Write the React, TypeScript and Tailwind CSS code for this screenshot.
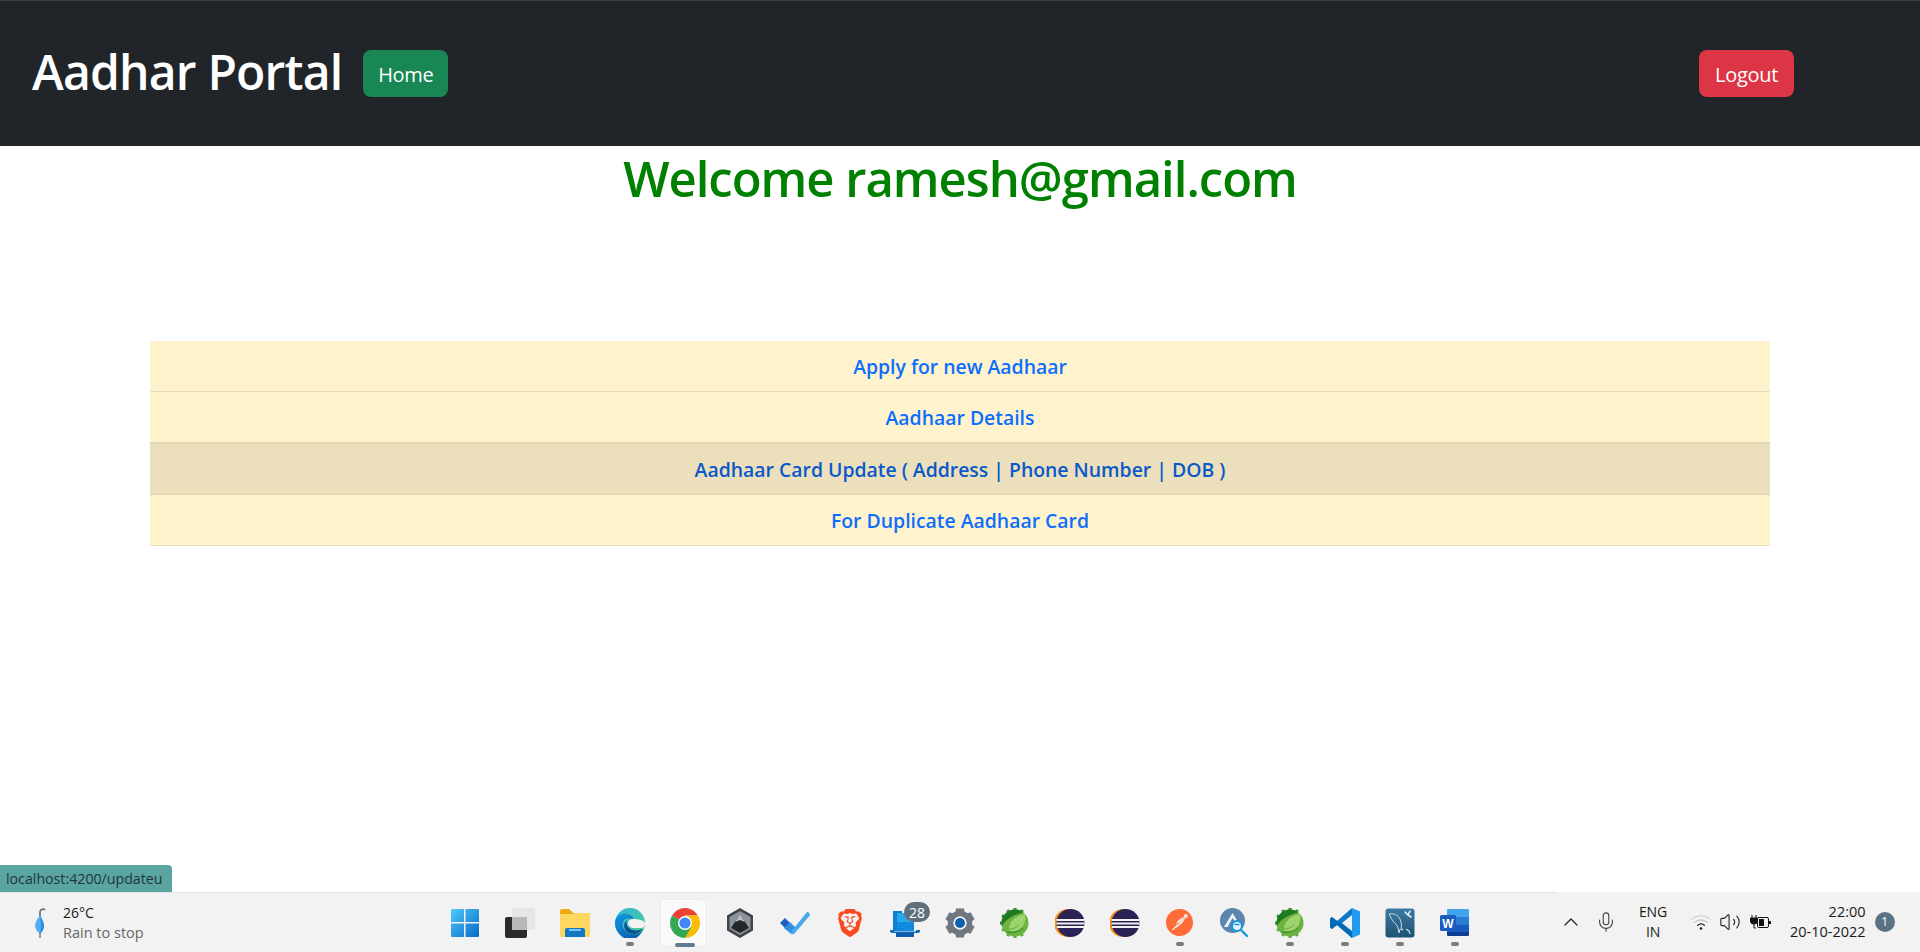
import { SiBrave, SiPostman } from "react-icons/si";
import { ChevronUp, Mic, Volume2 } from "lucide-react";

const rows = [
  { label: "Apply for new Aadhaar", active: false },
  { label: "Aadhaar Details", active: false },
  { label: "Aadhaar Card Update ( Address | Phone Number | DOB )", active: true },
  { label: "For Duplicate Aadhaar Card", active: false },
];

function StartIcon() {
  return (
    <svg width="30" height="30" viewBox="0 0 30 30">
      <defs>
        <linearGradient id="start" x1="0" y1="0" x2="1" y2="1">
          <stop offset="0" stopColor="#4fcbfa" />
          <stop offset="1" stopColor="#0669c8" />
        </linearGradient>
      </defs>
      <path fill="url(#start)" d="M1 2a1 1 0 0 1 1-1h12v13H1zM15.500 1H28a1 1 0 0 1 1 1v12H15.500zM1 15.500h13V29H2a1 1 0 0 1-1-1zM15.500 15.500H29V28a1 1 0 0 1-1 1H15.500z" />
    </svg>
  );
}

function TaskViewIcon() {
  return (
    <svg width="32" height="32" viewBox="0 0 32 32">
      <rect x="1" y="10" width="22" height="21" rx="2" fill="#2b2b2b" />
      <rect x="8" y="1" width="23" height="22" rx="2" fill="#e6e6e6" />
      <path d="M8 10h15v13H8z" fill="#b8b8b8" />
    </svg>
  );
}

function FolderIcon() {
  return (
    <svg width="32" height="30" viewBox="0 0 32 30">
      <path d="M1 3a2 2 0 0 1 2-2h7l4 4h16a1 1 0 0 1 1 1v4H1z" fill="#eeaa10" />
      <path d="M1 6h13l2-1h14a1 1 0 0 1 1 1v22a1 1 0 0 1-1 1H2a1 1 0 0 1-1-1z" fill="#fdd75f" />
      <path d="M6 29v-7a2 2 0 0 1 2-2h16a2 2 0 0 1 2 2v7z" fill="#1378c4" />
      <rect x="10" y="21" width="12" height="2" fill="#7fc4f0" />
    </svg>
  );
}

function EdgeIcon() {
  return (
    <svg width="30" height="30" viewBox="0 0 30 30">
      <defs>
        <linearGradient id="edge1" x1="0" y1="0" x2="1" y2="1">
          <stop offset="0" stopColor="#2fb3dc" />
          <stop offset="1" stopColor="#4fd08a" />
        </linearGradient>
        <linearGradient id="edge2" x1="0" y1="0" x2="0.8" y2="1">
          <stop offset="0" stopColor="#1098e6" />
          <stop offset="1" stopColor="#0c59a4" />
        </linearGradient>
      </defs>
      <circle cx="15" cy="15" r="15" fill="url(#edge1)" />
      <path d="M0 15C0 8 7 5 12 6c5 1 7 4 6 6-2-2-8-3-10 2-2 6 3 11 9 12 5 1 9-1 11-4-3 6-8 10-14 10C6 30 0 23 0 15z" fill="url(#edge2)" />
      <path d="M19 20c-3 0-6-2-6-5 0-2 2-4 5-4 5 0 12 1 12 5 0 3-2 4-4 4-3 0-4 0-7 0z" fill="#f2f2f2" />
      <path d="M18 22c-5-1-8-6-6-10-4 3-4 10 2 13 5 2 10 1 14-4-3 1-6 2-10 1z" fill="#0a4f96" />
    </svg>
  );
}

function ChromeIcon() {
  return (
    <svg width="30" height="30" viewBox="0 0 30 30">
      <path d="M15 15 2.010 7.500A15 15 0 0 1 27.990 7.500H15z" fill="#ea4335" />
      <path d="M15 15 15 30A15 15 0 0 0 27.990 7.500H15z" fill="#fbbc05" />
      <path d="M15 15 2.010 7.500A15 15 0 0 0 15 30l6.500-11.250z" fill="#34a853" />
      <circle cx="15" cy="15" r="7" fill="#ffffff" />
      <circle cx="15" cy="15" r="5.600" fill="#4285f4" />
    </svg>
  );
}

function HexIcon() {
  return (
    <svg width="28" height="30" viewBox="0 0 28 30">
      <path d="M14 0 27 7.500v15L14 30 1 22.500v-15z" fill="#3f4449" />
      <path d="M14 3 24.500 9v12L14 27 3.500 21V9z" fill="#8c939a" />
      <path d="M14 6 23 20l-9 5-9-5z" fill="#24272a" />
      <path d="M14 6 19 14l-5-2-5 2z" fill="#b9bfc5" />
    </svg>
  );
}

function TodoIcon() {
  return (
    <svg width="30" height="24" viewBox="0 0 30 24">
      <path d="m0 12 5-5 6 6-5 5z" fill="#1f5cc4" />
      <path d="M4 17 10 11l6 6-4 5a1.500 1.500 0 0 1-2 0z" fill="#2f8fe0" />
      <path d="M10 22 27 1a1 1 0 0 1 1.200 0l1.500 2a1 1 0 0 1 0 1.500L15 22c-1.500 1.700-3.500 1.700-5 0z" fill="#48a8ee" />
    </svg>
  );
}

function TowerIcon() {
  return (
    <svg width="30" height="28" viewBox="0 0 30 28">
      <path d="M3 2h9v20H3z" fill="#0f7fd0" />
      <path d="M7 4h17v18H7z" fill="#28a8ea" />
      <path d="M7 13h17v9H7z" fill="#0f8adf" />
      <path d="M0 21h4v1.500h22V21h4v1a2 2 0 0 1-2 2H2a2 2 0 0 1-2-2z" fill="#0f6cbd" />
      <path d="M6 24h18v4H6z" fill="#0b5cab" />
    </svg>
  );
}

function GearIcon() {
  const teeth = [0, 60, 120, 180, 240, 300];
  return (
    <svg width="30" height="30" viewBox="0 0 30 30">
      {teeth.map((a) => (
        <path key={a} d="M11 0.500h8l1 6h-10z" fill="#6d7780" transform={`rotate(${a} 15 15)`} />
      ))}
      <circle cx="15" cy="15" r="9.500" fill="none" stroke="#6d7780" strokeWidth="5.500" />
      <circle cx="15" cy="15" r="5" fill="#0f62ac" />
    </svg>
  );
}

function SpringIcon() {
  const teeth = [150, 180, 210, 240, 270, 300, 330, 0, 30];
  return (
    <svg width="30" height="30" viewBox="0 0 30 30">
      {teeth.map((a) => (
        <rect key={a} x="13.500" y="0" width="3" height="5" fill={a >= 150 && a <= 240 ? "#5aa838" : "#2a8a2c"} transform={`rotate(${a} 15 15)`} />
      ))}
      <circle cx="15" cy="15" r="13.500" fill="#6db33f" />
      <path d="M15 1.500A13.500 13.500 0 0 0 1.500 15c0 1 0 2 .3 3C5 12 13 7 23 4.500 21 2.500 18 1.500 15 1.500z" fill="#1f7a1f" />
      <path d="M25 6c1.500 8-2 14-7.500 16.500-3.500 1.300-7.500 1-9.500-1 5 .5 9.500-1.500 12-6-3 3-7 5-11 5 0-6 6.500-13 16-14.500z" fill="#9ed46f" />
      <path d="M7 24c5 1 12 0 16-4" fill="none" stroke="#2a8a2c" strokeWidth="1" />
    </svg>
  );
}

function EclipseIcon() {
  return (
    <svg width="30" height="30" viewBox="0 0 30 30">
      <circle cx="13" cy="15" r="14" fill="#f7941e" />
      <circle cx="15.500" cy="15" r="14" fill="#2c2255" />
      <rect x="1.500" y="11" width="28" height="2" fill="#f2f2f2" />
      <rect x="1.500" y="14.500" width="28" height="2" fill="#f2f2f2" />
      <rect x="2" y="18" width="27" height="2" fill="#f2f2f2" />
    </svg>
  );
}

function AnalyzerIcon() {
  return (
    <svg width="30" height="30" viewBox="0 0 30 30">
      <circle cx="12.500" cy="12.500" r="12.500" fill="#5b86b0" />
      <path d="M12.500 5 20 17l-3-1-4.500-6-5 9H4z" fill="#f2f2f2" />
      <circle cx="17" cy="18" r="5" fill="#e8f4fb" stroke="#1497dc" strokeWidth="2.200" />
      <path d="M14.500 16.500h5" stroke="#1497dc" strokeWidth="1.500" />
      <path d="m21 22 6 6" stroke="#1497dc" strokeWidth="2.400" strokeLinecap="round" />
    </svg>
  );
}

function VsCodeIcon() {
  return (
    <svg width="30" height="30" viewBox="0 0 30 30">
      <path d="M22 0 30 3.500v23L22 30z" fill="#1f9cf0" />
      <path d="M22 0 7 13l-5-4-2 1.500v9L2 21l5-4 15 13v-7l-10-8 10-8z" fill="#0a78c9" />
      <path d="M0 10.500 2 9l20 15v6L7 17l-5 4-2-1.500z" fill="#0065a9" opacity="0.7" />
    </svg>
  );
}

function WorkbenchIcon() {
  return (
    <svg width="30" height="30" viewBox="0 0 30 30">
      <defs>
        <linearGradient id="wb" x1="0" y1="0" x2="0" y2="1">
          <stop offset="0" stopColor="#3b7aa3" />
          <stop offset="1" stopColor="#1d5272" />
        </linearGradient>
      </defs>
      <rect x="0.500" y="0.500" width="29" height="29" rx="3" fill="url(#wb)" />
      <path d="M4 6c5-1 9 1 11 5 1 3 2 5 1 8l2 3-3-1-1 4-1-5c-1-3-3-5-5-7L6 10z" fill="none" stroke="#c9dbe6" strokeWidth="1" strokeLinejoin="round" />
      <path d="M20 4l3 3M25 3l-2 4 3 2" fill="none" stroke="#e6eef3" strokeWidth="1.600" strokeLinecap="round" />
      <path d="M21 21l3 2 1 3" fill="none" stroke="#c9dbe6" strokeWidth="1.200" />
    </svg>
  );
}

function WordIcon() {
  return (
    <svg width="30" height="30" viewBox="0 0 30 30">
      <path d="M7 1h21a2 2 0 0 1 1 1v7H7z" fill="#41a5ee" />
      <path d="M7 9h22v8H7z" fill="#2b7cd3" />
      <path d="M7 17h22v7H7z" fill="#185abd" />
      <path d="M7 24h22v3a1 1 0 0 1-1 1H8a1 1 0 0 1-1-1z" fill="#103f91" />
      <rect x="0" y="7" width="16" height="16" rx="1.500" fill="#1a5dbe" />
      <text x="8" y="19.500" textAnchor="middle" fontSize="12" fontWeight="700" fill="#ffffff" fontFamily="Liberation Sans, sans-serif">
        W
      </text>
    </svg>
  );
}

function WifiIcon() {
  return (
    <svg width="22" height="18" viewBox="0 0 22 18" fill="none" strokeLinecap="round">
      <path d="M1.500 6.500c5.500-5 13.500-5 19 0" stroke="#c8c8c8" strokeWidth="1" />
      <path d="M4.500 9.500c3.800-3.400 9.200-3.400 13 0" stroke="#b5b5b5" strokeWidth="1" />
      <path d="M7.500 12.500c2-1.800 5-1.800 7 0" stroke="#222222" strokeWidth="1.100" />
      <circle cx="11" cy="15.500" r="1.300" fill="#222222" />
    </svg>
  );
}

function BatteryIcon() {
  return (
    <svg width="22" height="16" viewBox="0 0 22 16">
      <path d="M2 1v3M6 1v3M0.500 4h7v3a3 3 0 0 1-3 3h-1a3 3 0 0 1-3-3z" fill="#111111" stroke="#111111" strokeWidth="1" />
      <path d="M4 10v4h2" fill="none" stroke="#111111" strokeWidth="1" />
      <rect x="7.500" y="3.500" width="11" height="10" rx="1.500" fill="none" stroke="#111111" strokeWidth="1" />
      <rect x="9" y="5" width="5" height="7" fill="#111111" />
      <rect x="19" y="7" width="2" height="3" rx="0.500" fill="#111111" />
    </svg>
  );
}

function Umbrella() {
  return (
    <svg width="12" height="30" viewBox="0 0 12 30">
      <path d="M6 8V4a3 3 0 0 1 5-2" fill="none" stroke="#6b7280" strokeWidth="1.800" />
      <path d="M6 7C3 11 1 15 1 18c0 3 3 6 5 8 2-2 4-5 4-8 0-3-2-7-4-11z" fill="#52aef5" />
      <path d="M6 7c1 4 1.500 12 0 19 2-2 4-5 4-8 0-3-2-7-4-11z" fill="#2f8de4" />
      <path d="M6 25v5" stroke="#6b7280" strokeWidth="1.400" />
    </svg>
  );
}

const dock = [
  { key: "start", icon: <StartIcon /> },
  { key: "taskview", icon: <TaskViewIcon /> },
  { key: "explorer", icon: <FolderIcon /> },
  { key: "edge", icon: <EdgeIcon />, dot: true },
  { key: "chrome", icon: <ChromeIcon />, active: true },
  { key: "hex", icon: <HexIcon /> },
  { key: "todo", icon: <TodoIcon /> },
  { key: "brave", icon: <SiBrave size={28} color="#fb4a1f" /> },
  { key: "tower", icon: <TowerIcon />, badge: "28" },
  { key: "settings", icon: <GearIcon /> },
  { key: "spring", icon: <SpringIcon /> },
  { key: "eclipse", icon: <EclipseIcon /> },
  { key: "eclipse2", icon: <EclipseIcon /> },
  { key: "postman", icon: <SiPostman size={27} color="#ff6c37" />, dot: true },
  { key: "analyzer", icon: <AnalyzerIcon /> },
  { key: "spring2", icon: <SpringIcon />, dot: true },
  { key: "vscode", icon: <VsCodeIcon />, dot: true },
  { key: "workbench", icon: <WorkbenchIcon />, dot: true },
  { key: "word", icon: <WordIcon />, dot: true },
];

export default function App() {
  return (
    <div className="flex h-screen flex-col overflow-hidden bg-white font-['Open_Sans',sans-serif]">
      <nav className="flex h-[146px] shrink-0 items-center border-t border-[#3d3e44] bg-[#212529]">
        <span className="mb-[4px] ml-[32px] text-[48px] leading-none font-semibold tracking-[-0.8px] text-white">Aadhar Portal</span>
        <a className="ml-[21px] flex h-[47px] w-[85px] items-center justify-center rounded-lg bg-[#198754] pt-[2px] text-[20px] tracking-[-0.3px] text-white">Home</a>
        <a className="mr-[126px] ml-auto flex h-[47px] w-[95px] items-center justify-center rounded-lg bg-[#dc3545] pt-[2px] text-[20px] tracking-[-0.3px] text-white">Logout</a>
      </nav>

      <main className="flex min-h-0 flex-1 flex-col">
        <h1 className="mt-[1px] text-center text-[49px] leading-[62px] font-semibold tracking-[-1px] text-[#008000]">Welcome ramesh@gmail.com</h1>

        <div className="mx-[150px] mt-[132px] flex flex-col">
          {rows.map((row) => (
            <div
              key={row.label}
              className={
                row.active
                  ? "flex h-[52px] items-center justify-center border-y border-[#dfd3ae] bg-[#ebe0bb] pt-[1px]"
                  : "flex h-[51px] items-center justify-center border-b border-[#e6dbb9] bg-[#fff3cd] pt-[1px]"
              }
            >
              <a className={row.active ? "text-[19.400px] font-semibold text-[#0a58ca]" : "text-[19.400px] font-semibold text-[#0d6efd]"}>{row.label}</a>
            </div>
          ))}
        </div>

        <div className="mt-auto flex h-[27px] w-[172px] items-center rounded-tr-[4px] bg-[#5ba5a1] pl-[6px] text-[14.200px] text-[#21363a]">
          localhost:4200/updateu
        </div>
      </main>

      <footer className="flex h-[60px] shrink-0 items-stretch bg-[#f2f2f2]">
        <div className="flex w-[437px] shrink-0 items-center border-t border-[#e3e3e3]">
          <div className="ml-[34px]">
            <Umbrella />
          </div>
          <div className="ml-[17px] flex flex-col text-[14px] leading-[20px]">
            <span className="text-[#1a1a1a]">26°C</span>
            <span className="text-[14.500px] text-[#666666]">Rain to stop</span>
          </div>
        </div>

        <div className="flex flex-1 border-t border-[#e3e3e3]">
          {dock.map((item) => (
            <div key={item.key} className="relative flex w-[55px] items-center justify-center">
              {item.active && <div className="absolute top-[6px] left-[3px] h-[48px] w-[47px] rounded-[4px] border border-[#ececec] bg-[#fafafa] shadow-[3px_0_0_-1px_#f6f6f6]" />}
              <div className="relative flex h-[32px] items-center justify-center">{item.icon}</div>
              {item.badge && (
                <span className="absolute top-[9px] left-[27px] flex h-[20px] w-[26px] items-center justify-center rounded-full bg-[#5f707c] text-[14px] text-white">{item.badge}</span>
              )}
              {item.dot && <span className="absolute bottom-[6px] left-[24px] h-[4px] w-[8px] rounded-full bg-[#7b7b7b]" />}
              {item.active && <span className="absolute bottom-[5px] left-[18px] h-[4px] w-[20px] rounded-full bg-[#5f7a8a]" />}
            </div>
          ))}
        </div>

        <div className="flex w-[364px] shrink-0 items-center text-[14px] text-[#1a1a1a]">
          <ChevronUp className="ml-[3px] h-[24px] w-[24px] text-[#222222]" strokeWidth={1.2} />
          <Mic className="ml-[12px] h-[22px] w-[22px] text-[#444444]" strokeWidth={1.2} />
          <div className="ml-[22px] flex flex-col items-center text-[14px] leading-[20px] tracking-[-0.2px]">
            <span>ENG</span>
            <span>IN</span>
          </div>
          <div className="ml-[23px]">
            <WifiIcon />
          </div>
          <Volume2 className="ml-[7px] h-[22px] w-[22px] text-[#222222]" strokeWidth={1.2} />
          <div className="ml-[9px]">
            <BatteryIcon />
          </div>
          <div className="ml-[18px] flex flex-col items-end text-[14.500px] leading-[20px]">
            <span>22:00</span>
            <span>20-10-2022</span>
          </div>
          <span className="ml-[9px] flex h-[20px] w-[20px] items-center justify-center rounded-full bg-[#5a7384] text-[12px] text-white">1</span>
        </div>
      </footer>
    </div>
  );
}
